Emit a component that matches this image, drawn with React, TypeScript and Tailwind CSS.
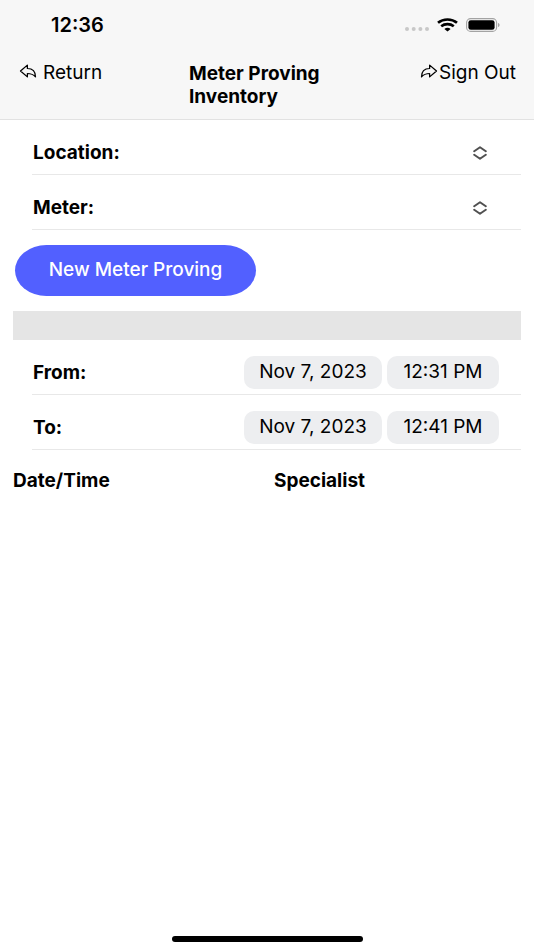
import type { ReactNode } from "react";
import { IoArrowRedoOutline, IoArrowUndoOutline } from "react-icons/io5";

type SelectRowProps = {
  id: string;
  label: string;
};

type DateRowProps = {
  id: string;
  label: string;
  date: string;
  time: string;
};

function StatusBar() {
  return (
    <div className="flex h-[50px] items-center justify-between pr-[34px] pl-[51px]">
      <span className="text-[20px] leading-6 font-semibold">12:36</span>
      <div className="flex items-center gap-2">
        <svg className="mt-2 h-1 w-6" viewBox="0 0 24 4" fill="#c8c8c8" aria-hidden="true">
          <circle cx="2" cy="2" r="2" />
          <circle cx="8.7" cy="2" r="2" />
          <circle cx="15.4" cy="2" r="2" />
          <circle cx="22" cy="2" r="2" />
        </svg>
        <svg className="h-[14px] w-[21px]" viewBox="0 0 21 14" fill="none" stroke="#000" aria-hidden="true">
          <path d="M1 4.8C6.3.4 14.7.4 20 4.8" strokeWidth="2.7" />
          <path d="M4.2 8.3c3.6-2.9 9-2.9 12.6 0" strokeWidth="2.6" />
          <path d="M7.4 10.9c1.8-1.4 4.4-1.4 6.2 0L10.5 13.6z" fill="#000" stroke="none" />
        </svg>
        <svg className="h-[14px] w-[34px]" viewBox="0 0 34 14" aria-hidden="true">
          <rect x="0.6" y="0.6" width="30" height="12.8" rx="4" fill="none" stroke="#a3a3a3" strokeWidth="1.1" />
          <rect x="2.4" y="2.2" width="26.2" height="9.6" rx="2.4" fill="#000" />
          <path d="M32 5c2.1.6 2.1 3.4 0 4z" fill="#a3a3a3" />
        </svg>
      </div>
    </div>
  );
}

function Header() {
  return (
    <header className="border-b border-[#e2e2e2] bg-[#f7f7f7]">
      <StatusBar />
      <div className="grid grid-cols-[1fr_auto_1fr] items-start px-[18px] pt-3 pb-[11px]">
        <button type="button" className="flex items-center gap-[5px] justify-self-start text-[19px] leading-5">
          <IoArrowUndoOutline className="mb-1 h-[18px] w-5" preserveAspectRatio="none" aria-hidden="true" />
          Return
        </button>
        <h1 className="w-[156px] text-[19px] leading-[23px] font-bold">Meter Proving Inventory</h1>
        <button type="button" className="flex items-center justify-self-end text-[19px] leading-5">
          <IoArrowRedoOutline className="mb-1 h-[18px] w-5" preserveAspectRatio="none" aria-hidden="true" />
          Sign Out
        </button>
      </div>
    </header>
  );
}

function Row({ children }: { children: ReactNode }) {
  return (
    <div className="mr-[13px] ml-8 flex h-[55px] items-center justify-between border-b border-[#e8e8e8] pt-[11px] pl-px">
      {children}
    </div>
  );
}

function SelectRow({ id, label }: SelectRowProps) {
  return (
    <Row>
      <label htmlFor={id} className="text-[19px] leading-6 font-bold">
        {label}
      </label>
      <div className="relative ml-4 flex flex-1 items-center">
        <select id={id} defaultValue="" className="h-8 w-full appearance-none bg-transparent text-[19px]">
          <option value=""></option>
        </select>
        <svg
          className="pointer-events-none absolute right-[34px] h-[14px] w-[14px]"
          viewBox="0 0 14 14"
          fill="none"
          stroke="#505050"
          strokeWidth="2"
          strokeLinecap="round"
          strokeLinejoin="round"
          aria-hidden="true"
        >
          <path d="M1.2 5.3 7 1.3 12.8 5.3M1.2 8.7 7 12.7 12.8 8.7" />
        </svg>
      </div>
    </Row>
  );
}

function DateRow({ id, label, date, time }: DateRowProps) {
  return (
    <Row>
      <span id={id} className="text-[19px] leading-6 font-bold">
        {label}
      </span>
      <div role="group" aria-labelledby={id} className="mr-[22px] flex gap-[5px]">
        <button type="button" className="h-[33px] w-[138px] rounded-[10px] bg-[#edeef0] text-[19px] whitespace-nowrap">
          {date}
        </button>
        <button type="button" className="h-[33px] w-[112px] rounded-[10px] bg-[#edeef0] text-[19px] whitespace-nowrap">
          {time}
        </button>
      </div>
    </Row>
  );
}

export default function App() {
  return (
    <div className="flex min-h-screen flex-col bg-white font-['Inter','Liberation_Sans',sans-serif] text-black">
      <Header />
      <main className="flex-1">
        <SelectRow id="location" label="Location:" />
        <SelectRow id="meter" label="Meter:" />
        <div className="px-[15px] py-[15px]">
          <button
            type="button"
            className="h-[51px] w-[241px] rounded-[32px/26px] bg-[#5260ff] text-[19px] font-medium text-white"
          >
            New Meter Proving
          </button>
        </div>
        <div className="mx-[13px] h-[29px] bg-[#e5e5e5]" />
        <DateRow id="from" label="From:" date="Nov 7, 2023" time="12:31 PM" />
        <DateRow id="to" label="To:" date="Nov 7, 2023" time="12:41 PM" />
        <div className="px-[13px] pt-[19px]">
          <table className="w-full table-fixed text-left text-[19px] leading-6">
            <thead>
              <tr>
                <th className="w-1/2 font-bold">Date/Time</th>
                <th className="pl-[7px] font-bold">Specialist</th>
              </tr>
            </thead>
          </table>
        </div>
      </main>
      <div className="mx-auto mb-2 h-[6px] w-[191px] rounded-full bg-black" />
    </div>
  );
}
